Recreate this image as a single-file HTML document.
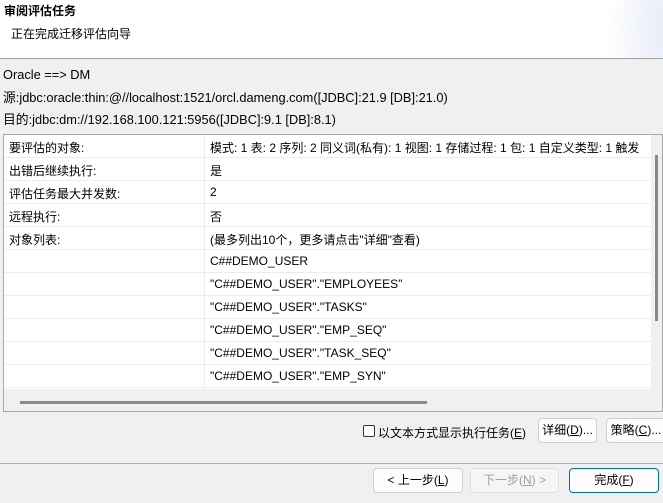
<!DOCTYPE html>
<html><head><meta charset="utf-8"><style>
*{margin:0;padding:0;box-sizing:border-box}
body{width:663px;height:503px;background:#f0f0f0;font-family:"Liberation Sans","Noto Sans CJK SC",sans-serif;font-size:12px;color:#000;position:relative;overflow:hidden}
.abs{position:absolute;white-space:nowrap}
#hdr{position:absolute;left:0;top:0;width:663px;height:59px;background:#fff;border-bottom:1px solid #a0a0a0;overflow:hidden}
#hdr .g{position:absolute;left:590px;top:-60px;width:180px;height:180px;border-radius:50%;background:radial-gradient(circle at 70% 50%,#dde4f4 0%,#eef1fa 45%,#fff 70%)}
#tbl{position:absolute;left:3px;top:134px;width:660px;height:278px;border:1px solid #a8a8a8;background:#fff;overflow:hidden}
.row{position:absolute;left:0;width:650px;height:23px;border-bottom:1px solid #ececec}
.row span{position:absolute;top:4px;white-space:nowrap}
.c1{left:5px}.c2{left:206px}
.div{position:absolute;left:200px;top:0;width:1px;height:254px;background:#ececec}
.btn{position:absolute;height:25px;border:1px solid #cfcfcf;border-radius:4px;background:#fdfdfd;text-align:center;line-height:23px}
.t13{font-size:12.8px;line-height:15px}
</style></head><body>
<div id="hdr"><div class="g"></div>
<div class="abs" style="left:4px;top:2px;font-weight:bold;font-size:12px">审阅评估任务</div>
<div class="abs" style="left:11px;top:25px">正在完成迁移评估向导</div>
</div>
<div class="abs t13" style="left:3px;top:67px">Oracle ==&gt; DM</div>
<div class="abs t13" style="left:3px;top:90px">源:jdbc:oracle:thin:@//localhost:1521/orcl.dameng.com([JDBC]:21.9 [DB]:21.0)</div>
<div class="abs t13" style="left:3px;top:112px">目的:jdbc:dm://192.168.100.121:5956([JDBC]:9.1 [DB]:8.1)</div>
<div id="tbl">
<div class="row" style="top:0"><span class="c1">要评估的对象:</span><span class="c2">模式: 1 表: 2 序列: 2 同义词(私有): 1 视图: 1 存储过程: 1 包: 1 自定义类型: 1 触发</span></div>
<div class="row" style="top:23px"><span class="c1">出错后继续执行:</span><span class="c2">是</span></div>
<div class="row" style="top:46px"><span class="c1">评估任务最大并发数:</span><span class="c2">2</span></div>
<div class="row" style="top:69px"><span class="c1">远程执行:</span><span class="c2">否</span></div>
<div class="row" style="top:92px"><span class="c1">对象列表:</span><span class="c2">(最多列出10个，更多请点击"详细"查看)</span></div>
<div class="row" style="top:115px"><span class="c2">C##DEMO_USER</span></div>
<div class="row" style="top:138px"><span class="c2">"C##DEMO_USER"."EMPLOYEES"</span></div>
<div class="row" style="top:161px"><span class="c2">"C##DEMO_USER"."TASKS"</span></div>
<div class="row" style="top:184px"><span class="c2">"C##DEMO_USER"."EMP_SEQ"</span></div>
<div class="row" style="top:207px"><span class="c2">"C##DEMO_USER"."TASK_SEQ"</span></div>
<div class="row" style="top:230px"><span class="c2">"C##DEMO_USER"."EMP_SYN"</span></div>
<div class="div"></div>
<div style="position:absolute;left:0;top:254px;width:660px;height:24px;background:#f0f0f0"></div>
<div style="position:absolute;left:16px;top:266px;width:407px;height:3px;background:#8a8a8a"></div>
<div style="position:absolute;left:647px;top:0;width:13px;height:254px;background:#f0f0f0"></div>
<div style="position:absolute;left:651px;top:20px;width:3px;height:166px;background:#8a8a8a"></div>
</div>
<div style="position:absolute;left:363px;top:425px;width:12px;height:12px;border:1px solid #333;border-radius:2px;background:#fff"></div>
<div class="abs" style="left:378px;top:424px">以文本方式显示执行任务(<u>E</u>)</div>
<div class="btn" style="left:538px;top:418px;width:59px">详细(<u>D</u>)...</div>
<div class="btn" style="left:606px;top:418px;width:60px">策略(<u>C</u>)...</div>
<div style="position:absolute;left:0;top:463px;width:663px;height:1px;background:#b0b0b0"></div>
<div class="btn" style="left:373px;top:468px;width:90px">&lt; 上一步(<u>L</u>)</div>
<div class="btn" style="left:470px;top:468px;width:89px;color:#a0a0a0;background:#f5f5f5;border-color:#e0e0e0">下一步(<u>N</u>) &gt;</div>
<div class="btn" style="left:569px;top:468px;width:90px;border-color:#0067c0">完成(<u>F</u>)</div>
</body></html>
